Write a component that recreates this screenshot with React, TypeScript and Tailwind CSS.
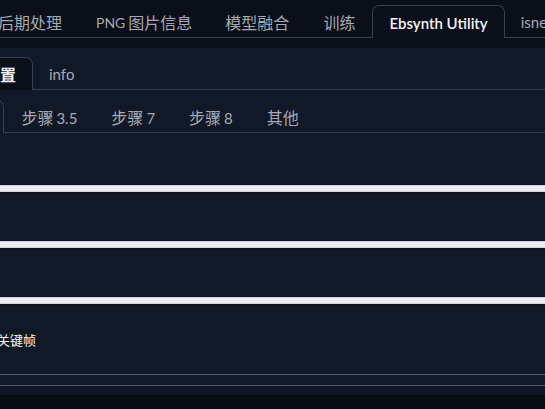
const cjkTabs = ['模型融合', '训练'];
const stepTabs = ['3.5', '7', '8'];

function WhiteBar() {
  return (
    <div className="flex flex-col">
      <div className="h-[7px] border-y border-[#d4d4dc] bg-[#ececf1]" />
      <div className="h-[2px] bg-[#0d1220]" />
    </div>
  );
}

export default function App() {
  return (
    <div
      className="h-[409px] w-[545px] overflow-hidden bg-[#0b0f19] text-[15px] text-[#a5aab4]"
      style={{ fontFamily: 'Lato, "Noto Sans CJK SC", sans-serif' }}
    >
      {/* top tab strip */}
      <div className="flex h-[38px] items-end whitespace-nowrap">
        <div className="ml-[-19px] flex h-[32px] items-center border-b border-[#374151] px-[17px] pt-[2px] text-[16px]">后期处理</div>
        <div className="flex h-[32px] items-center border-b border-[#374151] pl-[17px] pr-[16px] pt-[2px]">
          <span className="text-[14px]">PNG</span>
          <span className="ml-[3px] text-[16px]">图片信息</span>
        </div>
        {cjkTabs.map((t) => (
          <div key={t} className="flex h-[32px] items-center border-b border-[#374151] px-[17px] pt-[2px] text-[16px]">
            {t}
          </div>
        ))}
        <div className="flex h-[33px] items-center rounded-t-[7px] border border-b-0 border-[#374151] bg-[#0b0f19] px-4 pt-[2px] font-semibold text-[#f3f4f6]">
          Ebsynth Utility
        </div>
        <div className="flex h-[32px] flex-1 items-center border-b border-[#374151] px-4 pt-[2px]">isnet</div>
      </div>

      <div className="h-[10px]" />

      <div className="flex h-[361px] flex-col bg-[#111827]">
        {/* second tab strip */}
        <div className="flex h-[42px] items-end whitespace-nowrap">
          <div className="ml-[-33px] flex h-[33px] items-center rounded-t-[7px] border border-b-0 border-[#374151] bg-[#0b0f19] px-4 pt-[2px] text-[16px] font-semibold text-[#f3f4f6]">
            设置
          </div>
          <div className="flex h-[32px] flex-1 items-center border-b border-[#374151] px-4 pt-[2px]">info</div>
        </div>

        {/* step tab strip */}
        <div className="mt-[10px] flex h-[33px] items-end whitespace-nowrap">
          <div className="ml-[-75px] flex h-[33px] items-center rounded-t-[7px] border border-b-0 border-[#374151] bg-[#111827] px-4 pt-[3px] text-[16px] text-[#f3f4f6]">
            步骤 1
          </div>
          {stepTabs.map((t) => (
            <div key={t} className="flex h-[32px] items-center border-b border-[#374151] px-[17px] pt-[3px]">
              <span className="text-[16px]">步骤</span>
              <span className="ml-[3px]">{t}</span>
            </div>
          ))}
          <div className="flex h-[32px] items-center border-b border-[#374151] px-[17px] pt-[3px] text-[16px]">其他</div>
          <div className="h-[32px] flex-1 border-b border-[#374151]" />
        </div>

        {/* content blocks */}
        <div className="h-[52px]" />
        <WhiteBar />
        <div className="h-[47px]" />
        <WhiteBar />
        <div className="h-[47px]" />
        <WhiteBar />
        <div className="flex h-[68px] items-center pt-[2px]">
          <span className="ml-[-3px] text-[13px] text-[#f3f4f6]">关键帧</span>
        </div>
        <div className="h-[1px] bg-[#4b5563]" />
        <div className="h-[10px]" />
        <div className="h-[1px] bg-[#4b5563]" />
        <div className="h-[9px] bg-[#121628]" />
        <div className="flex-1 bg-[#080c15]" />
      </div>
      <div className="h-[1px] bg-[#4b5563]" />
    </div>
  );
}
